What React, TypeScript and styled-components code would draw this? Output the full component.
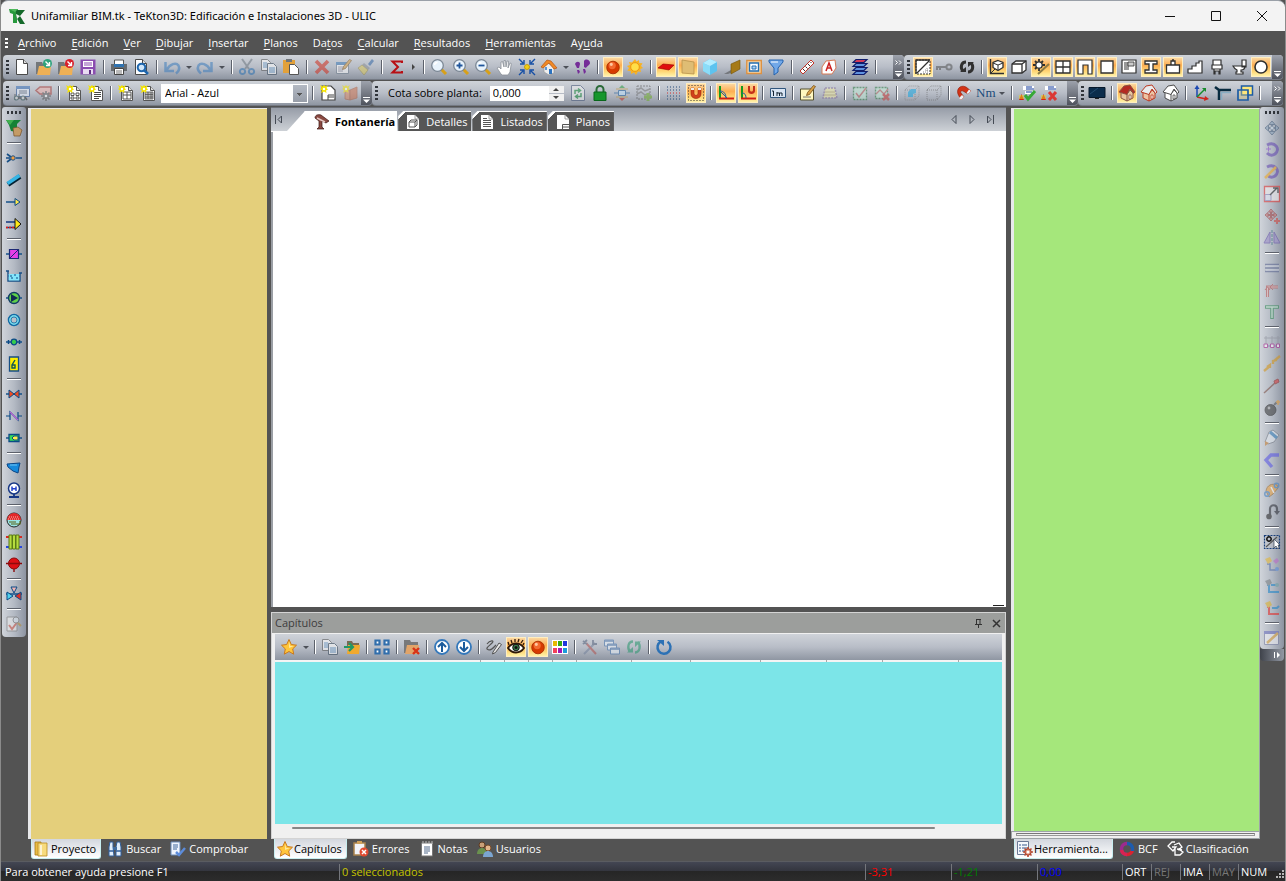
import React from "react";
import styled, { createGlobalStyle, css } from "styled-components";

const Global = createGlobalStyle`
  *, *::before, *::after { box-sizing: border-box; }
  body { margin: 0; background: #535353; }
  body, button, input, select { font-family: "Open Sans", "Noto Sans", sans-serif; font-size: 11px; line-height: 16px; }
  button { border: 0; padding: 0; background: none; color: inherit; }
`;

/* ---------- icon artwork: every entry is a list of [path, fill, stroke, stroke width, dash] on a 16 x 16 grid ---------- */

type Shape = [string, string, string?, number?, string?];
const c = (x: number, y: number, r: number) => `M${x - r} ${y}a${r} ${r} 0 1 0 ${2 * r} 0a${r} ${r} 0 1 0 ${-2 * r} 0`;
const r = (x: number, y: number, w: number, h: number) => `M${x} ${y}h${w}v${h}h${-w}z`;
const N = "none";
const ink = "#303030";
const navy = "#0a4a86";

const page: Shape[] = [["M2.5 .5h7l4 4v11h-11z", "#fff", "#4a4a4a", 1], ["M9.5 .5v4h4", "#ddd", "#4a4a4a", 1]];
const sheet: Shape[] = [["M3.500 1.500h7l4 4v10h-11z", "#fff", "#555", 1], ["M10.500 1.500v4h4", "#ddd", "#555", 1]];
const spark: Shape[] = [["M0 0l2.500 1.500L4 0l1.500 1.500L8 0 6.500 3 8 4.500 6 5.500 6.500 8 4 6.500 1 8l1-2.500L0 4l1.500-1z", "#f5e400"], [c(4, 4, 1.2), "#fff"]];
const folder = (color: string): Shape[] => [["M0 3h6l1 2h5v10H0z", "#74777a"], ["M3 7h12l-1 9H1z", "#eeb055"], [c(11.5, 4.5, 4.5), color], ["M9.500 2.500l4 4M13.500 3v3.500H10", N, "#fff", 1.4]];
const lens: Shape[] = [["M10 10l5 5", N, "#d8a018", 3], [c(6.5, 6.5, 5.8), "#e8f3fc", "#7b8794", 1.3], ["M3.500 6a3 3 0 013-2.500", N, "#fff", 1.5]];
const ball: Shape[] = [[c(8, 8.5, 6.3), "#d63a00", "#a32a00", .8], [c(7.2, 6.6, 3.6), "#f26a30"], [c(6.3, 5.3, 1.6), "#ffc7a0"]];
const hip = (wall: string, roof: string, line: string): Shape[] => [
  ["M2 7v6l6 3 6-3V7L10 3z", wall, line, 1],
  ["M8 16V9l3-4 3 3", N, line, 1],
  ["M0 7l5-6 6-1 5 7-1.500 1.500L11 4 8 9.500z", roof, line, 1],
  [r(10, 10, 2, 4), "#fff", line, .8],
];
const valve: Shape[] = [["M0 8h16", N, navy, 1.4]];
const pen: Shape[] = [["M15.500 1.500l-2-1-6 7-1 3 3-1z", "#d8a24a", "#77501b", .8]];

const art: Record<string, Shape[]> = {
  logo: [["M0 1h9l-1 3v11H4V6L1 5z", "#27993c"], ["M7 2h9l-5 6 5 8h-5L7 9z", "#14692a"], ["M7 6l4 2-3 3z", "#f0f4f0"], ["M0 1h9L6 4z", "#4fb95c"]],
  newDoc: page,
  open: folder("#2fa37c"),
  import: folder("#d81f2a"),
  save: [[r(.5, .5, 15, 15), "#8b4cb0"], [r(3, 2, 10, 6), "#fff"], ["M4 4h8M4 6h8", N, "#8b4cb0", 1], [r(3, 10, 10, 5), "#e9dcf2"], [r(9, 11, 2, 4), "#5d2a80"]],
  print: [[r(3.500, 1, 9, 5), "#fff", "#555", 1], [r(0, 5, 16, 7), "#666b70"], [r(3, 5, 10, 3), "#2f72b0"], [r(3.500, 9.500, 9, 6), "#fff", "#444", 1], ["M5 12h6M5 14h6", N, "#777", 1]],
  preview: [...page, [c(8.5, 8.5, 3.8), "#cfe6fa", "#1f66ad", 2], ["M11 11l4 4", N, "#1f66ad", 2.500]],
  undo: [["M1.500 3v9H10M2.500 11C6 5 12 3 14.500 6.500c1.500 3 0 6-2.500 8", N, "#3c7cbc", 2.500]],
  redo: [["M14.500 3v9H6M13.500 11C10 5 4 3 1.500 6.500c-1.500 3 0 6 2.500 8", N, "#3c7cbc", 2.500]],
  cut: [["M3 0l7 10M13 0L6 10", N, "#6d7780", 2], [c(3.5, 12.5, 2.6), N, "#2f72b0", 2], [c(12.5, 12.5, 2.6), N, "#2f72b0", 2]],
  copy: [["M.5 .5h6l3 3v8h-9z", "#fff", "#555", 1], ["M6.500 4.500h6l3 3v8h-9z", "#fff", "#345", 1], ["M2 4h4M2 6h4M2 8h4M8 9h6M8 11h6M8 13h6", N, "#2f72b0", 1]],
  paste: [[r(0, 1, 12, 13), "#e2a13a"], [r(3, 0, 6, 3), "#70757a"], ["M6.500 5.500h5l4 4v6h-9z", "#fff", "#555", 1]],
  cross: [["M2 2l12 12M14 2L2 14", N, "#d02d1e", 3.6]],
  edit: [[r(.5, 3.500, 12, 11), "#fff", "#6f7d8c", 1], [r(0, 3, 13, 3), "#3c78b4"], ["M2 8h7M2 10h5M2 12h5", N, "#889", 1], ...pen],
  brush: [["M10 5l4-5 2 2-4 5z", "#3567a5"], ["M6 4l6 5-2 2-6-5z", "#8a8e93"], ["M4 6l6 5-4 5L0 9z", "#dcca5f", "#8b7b2b", .6]],
  sigma: [["M13 4V2.500H3.500L9 8l-5.500 5.500H13V12", N, "#b80f14", 2]],
  zoom: lens,
  zoomIn: [...lens, ["M3.500 6.500h6M6.500 3.500v6", N, "#1f559b", 1.800]],
  zoomOut: [...lens, ["M3.500 6.500h6", N, "#1f559b", 1.800]],
  hand: [["M4 15L0 9l2-1 2 2V3l1.500-.5L7 8V1.500h1.500L9 8l1-6 1.500.2L11 9l2-5 1.300.5L13 13l-2 3H5z", "#fff", "#8a9098", .8]],
  fit: [[c(8, 8, 2.5), "#f2cf12", "#bd9000", .8], ["M0 0l4 4M5 1v4H1M16 0l-4 4M11 1v4h4M0 16l4-4M5 15v-4H1M16 16l-4-4M11 15v-4h4", N, "#164fa5", 1.4]],
  home: [["M3 8l4-4 6 5v5l-5 2-5-3z", "#eee", "#999", .7], ["M0 8l6-7 4 1 6 7-3 1-5-6-6 5z", "#f08a26", "#b65312", .7], [r(8, 10, 3, 5), "#2c72bf"], [r(4, 8, 2, 3), "#5b98da"]],
  feet: [["M1 5c1-3 5-3 5 0l-1 4H3zM3 11h2l1 2-2 2zM10 2c2-3 6-1 6 2 0 2-3 3-4 5l-2-1zM9 10h2l1 3-2 2z", "#752d98"]],
  ball,
  sun: [["M8 0l1.500 2.500L12 1l.3 3 3.200.200L14 7l2 2-2.700 1 .7 3-3-.4L9 16l-2-2.600L4 15l-.3-3-3.300-.3L2 9 0 7l3-1-1-3 3 .5z", "#f7b224"], [c(8, 8, 4.3), "#ffdf48", "#e88b0c", .8]],
  redTile: [["M0 9l5-4 11 1-5 5z", "#e00d0d", "#970000", .6]],
  wall: [["M2 1l12 2v12L2 14z", "#dfbd74", "#b7924c", .8]],
  cube: [["M1 4l7-4 7 3v9l-7 4-7-4z", "#5dc3ef"], ["M1 4l7 3v9l-7-4z", "#8adcf8"], ["M1 4l7-4 7 3-7 4z", "#b3edff"]],
  ramp: [["M0 15l7-4h2v2l-5 2z", "#74777c"], ["M7 5l9-4v9l-9 5z", "#a67a18", "#74540c", .6]],
  frames: [[r(.8, 1.500, 14.500, 13), "#f6d6a8", "#dc9244", 1.400], [r(3.500, 4, 9, 8), "#fff", "#256fb3", 1.400], [r(6, 7, 4, 3), "#acd3f7", "#256fb3", 1]],
  funnel: [["M1 1h14v2L10 9v4l-4 3V9L1 3z", "#72a8e8", "#2462ae", 1], ["M3 3h7", N, "#fff", 1]],
  ruler: [["M1 12L12 1l3 3L4 15z", "#fff", "#c33428", 1], ["M4 10l2 2M6.500 7.500l2 2M9 5l2 2M11.500 3l1 1", N, "#333", 1]],
  tag: [["M1 8l4-6 9-1 1 8-4 6H1z", "#fff", "#d77a57", 1], ["M5 12l3-8 3 8M6 9h4", N, "#c22", 1.500]],
  layers: [["M4 .5h11l-3 3H1z", "#d23a5a", "#101d6b", 1.200], ["M4 4.500h11l-3 3H1zM4 8.500h11l-3 3H1zM4 12.500h11l-3 3H1z", "#5f93e0", "#101d6b", 1.200]],
  hatch: [[r(1, 1, 14, 14), "#fff", ink, 1, "2 1"], ["M1 15V1h14M2 14L14 2", N, ink, 1.300], ["M8 13h5M10 11h3M12 9v3", N, "#777", .8, "1 1"]],
  key: [[c(12, 8, 2.6), N, "#555", 2], ["M9 8H0v3M3 8v3", N, "#555", 2]],
  sync: [["M7 3C2 3 1 9 4 12M9 13c5 0 6-6 3-9", N, ink, 3], ["M1 13h6V8zM15 3H9v5z", ink]],
  axisCube: [["M1.500 0v14.500H15", "none", ink, 1.400], ["M9 1.500l5 2v5l-5 3-5-3v-5z", "#fff", ink, 1.300], ["M4 4l5 2 5-2M9 6v5M2 14l4-4", N, ink, 1]],
  box: [["M1 5l4-3h10v9l-4 3H1z", "#fff", ink, 1.300], ["M1 5h10v9M11 5l4-3", N, ink, 1.300]],
  gear: [["M6 0v3M6 9v3M0 6h3M9 6h3M2 2l2 2M10 2L8 4M2 10l2-2", N, ink, 1.800], [c(6, 6, 3.200), "#fff", ink, 1.300], ["M5 15L16 5", N, "#8d7b45", 2]],
  window: [[r(1, 2, 14, 12), "#fff", ink, 1.300], ["M8 2v12M1 8h14", N, ink, 1.300]],
  door: [["M1 15V1h14v14h-4V6H6v9z", "#fff", ink, 1.200]],
  square: [[r(2, 2, 12, 12), "#fff", ink, 1.300]],
  corner: [[r(1, 1, 14, 13), "#fff", ink, 1.200], [r(3, 3, 5, 8), "#999"], [r(7, 3, 6, 4), "#ccc", ink, .8]],
  beam: [["M2 2h12v3h-4v6h4v3H2v-3h4V5H2z", "#fff", ink, 1.300]],
  weight: [["M6 2h4v4H6zM1.500 6h13v8h-13z", "#fff", ink, 1.300], ["M8 0v2", N, ink, 1.500]],
  stairs: [["M1 14v-4h4V7h4V4h3V2h3v12z", "#fff", ink, 1.200]],
  chair: [["M4 1h8v5H4zM3 6h10v4H3zM5 10v5h1v-3h4v3h1v-5", "#fff", ink, 1.200]],
  toilet: [["M11 1h4v7h-4zM2 7h12c0 3-2 4-4 4v2h2v2H5v-2h1v-2C4 10 3 9 2 7z", "#fff", ink, 1.200]],
  ring: [[c(8, 8, 6), "#fff", ink, 1.6]],
  form: [[r(2.500, 1.500, 13, 10), "#e5eefb", "#28508c", 1], [r(2, 1, 14, 3), "#376db5"], ["M5 6h8M5 8h8", N, "#456", 1], ["M1 9v6M5 9v4", N, "#333", 1], [c(2.5, 13, 2), "#ddd", "#355", 1.200], [c(9, 13, 2), "#ddd", "#355", 1.200], ["M4 13h3M11 12l2 3", N, "#333", 1.500]],
  tagGear: [["M4 2h11v7H4L0 5.500z", "#ecb3ad", "#a53a35", 1.500], ["M10 6v10M5 11h10M6.500 7.500l7 7M13.500 7.500l-7 7", N, "#555", 1.600], [c(10, 11, 3), "#666"], [c(10, 11, 1.3), "#fff"]],
  sheetGrid: [...sheet, [r(5, 8, 3, 2.500), "#fff", "#444", .9], [r(10, 8, 3, 2.500), "#fff", "#444", .9], [r(5, 12, 3, 2), "#fff", "#444", .9], [r(10, 12, 3, 2), "#fff", "#444", .9], ...spark],
  sheetLines: [...sheet, ["M6 7.500h7M6 9.500h7M6 11.500h7M6 13.500h5", N, "#444", 1], ...spark],
  sheetTable: [...sheet, ["M5 7h8v7H5zM5 10h8M9 7v7", N, "#555", 1], ...spark],
  sheetTable2: [...sheet, ["M5 7h8v7H5zM5 9.500h8M5 12h8M8 7v7M11 7v7", "#bbb", "#555", .8], ...spark],
  sheetPlan: [["M2 1h9l4 4v10H2z", "#fff", "#444", 1.200], ["M8 15v-5h6M8 12h6", N, "#444", 1], ...spark],
  books: [["M3 5h5v10l-5-1z", "#d98a67", "#a8593a", .8], ["M8 5l7-3v11l-7 2z", "#cc7350", "#a8593a", .8], ...spark],
  swap: [["M1.500 .5h9l4 4v11h-13z", "#eee", "#457", 1], ["M5 9V5.500h5M8 3.500l2.500 2L8 7.500M11 8v3.500H6M8 9.500l-2.500 2 2.500 2", N, "#168a3a", 1.500]],
  lock: [["M4.500 8V4.500a3.500 3.500 0 017 0V8", N, "#2b6a38", 2], [r(2, 7, 12, 8.500), "#17962d", "#08661a", 1]],
  level: [["M0 8h4M12 8h4", N, "#1b5a9b", 1.200], [r(4.500, 5.500, 7, 5), "#bde0fa", "#1b5a9b", 1], ["M8 0l3 3H5z", "#2a9a3f"], ["M8 16l3-3H5z", "#c23226"], ["M2 4h12M2 12h12", N, "#c2942e", 1]],
  waves: [[r(1, 1, 13, 13), N, "#555", 1, "2 1"], ["M1 5l4-2 4 3 5-2M1 9l4-2 4 3 5-2", N, "#777", 1.500], ["M12 8v8M8 12h8", N, "#6caa28", 3]],
  dots: [["M1 2h14M1 5h14M1 11h14M1 14h14", N, "#274c7a", 1, "1 2"], ["M1 8h14", N, "#c33", 1, "1 2"]],
  magnetDots: [[r(.5, .5, 15, 15), N, "#333", 1, "1 2"], ["M3 3h3v5c0 3 4 3 4 0V3h3v6c0 6-10 6-10 0z", "#d2401b", "#8f230a", .5], ["M3 3h3v2H3zM10 3h3v2h-3z", "#eee"]],
  angle: [["M2 1v12", N, "#159b20", 2], ["M1 13.500h15", N, "#d01f16", 2], ["M2 6c4 0 6 3 6 7M2 6l7 7", N, "#24629b", 1]],
  angleMagnet: [["M2 1v12", N, "#159b20", 2], ["M1 13.500h15", N, "#d01f16", 2], ["M2 8c3 0 4 2 4 5", N, "#24629b", 1], ["M8 1h2v4c0 2 3 2 3 0V1h2v5c0 4-7 4-7 0z", "#c4301a"]],
  metre: [[r(.5, 3.500, 15, 9), "#d8e4f3", "#31567d", 1], ["M2 6h1.500v5M7 11V7M7 8h2.500v3M9.500 8H12v3", N, "#123", 1]],
  note: [[r(.5, 4, 13, 11), "#fff7c0", "#55502f", 1], ["M3 12h8", N, "#777", 1], ...pen],
  trapeze: [["M3 3h10l2 10H1z", "#eee9a3", "#846f9e", 1.500, "2 1"], ["M3 7h10M2 10h12", N, "#b3a463", 1]],
  selCheck: [[r(1.500, 2.500, 13, 12), "#bfe7d3", "#307846", 1.300, "2 1"], ["M4 8l3 4 7-9", N, "#b5615f", 1.5]],
  selCross: [[r(1.500, 2.500, 12, 11), "#bfe7d3", "#307846", 1.300, "2 1"], ["M2 9l4-4 4 4 4-5", N, "#b5615f", 1.3], ["M9 9l6 6M15 9l-6 6", N, "#c33d38", 2.500]],
  cubeBlue: [["M1 5l4-4h10v10l-4 4H1zM1 5h10v10M11 5l4-4", N, "#777", 1, "1 1"], ["M4 7l3-3h5v4l-3 1v3H4z", "#16a5e0"]],
  cubeDots: [["M1 5l4-4h10v9l-4 5H1zM1 5h10v10M11 5l4-4", N, "#666", 1, "1 1"]],
  magnet: [["M3 11C-1 5 4-1 10 2l5 4-3 3-5-3c-2-1-3 1-2 2l3 4-3 3z", "#d23316", "#8e1907", .6], ["M12 9l3-3-2-1.500L10.500 8zM5 15l3-3-2-2-3 3z", "#eceff2"]],
  listOk: [["M4 1h11v4H4zM6 6h9v3H6z", "#fff"], ["M7 2h6M7 4h8M7 7h6", N, "#123a9c", 1], ["M0 15l2.500-6L5 15z", "#d62217"], ["M0 11h5M0 13h5", N, "#ead61b", 1], ["M6 10l3 4 7-8", N, "#37a937", 3]],
  listBad: [["M4 1h11v4H4z", "#fff"], ["M7 2h6M7 4h8", N, "#123a9c", 1], ["M0 15l2.500-6L5 15z", "#d62217"], ["M0 11h5M0 13h5", N, "#ead61b", 1], ["M8 7l7 8M15 7l-7 8", N, "#db3834", 3]],
  screen: [[r(0, 2.500, 16, 10), "#0b2d4c", "#06182a", 1], [r(6, 13, 4, 1), "#222"], ["M1 9L9 3", N, "#234d70", 1]],
  house1: hip("#e9c69f", "#b42a22", "#8a5544"),
  house2: hip("#edc5a5", "#e9eced", "#ba3a23"),
  house3: hip("#fff", "#fff", "#4c4c4c"),
  axes: [["M4 3v9", N, "#1b48b2", 1.500], ["M4 12l9 2", N, "#cf231b", 1.700], ["M4 12l8-8", N, "#178b2c", 1.500], ["M1.500 4L4 0l2.500 4z", "#1b48b2"], ["M12 11l4 3-5 2z", "#cf231b"], ["M9 3h4v4z", "#178b2c"]],
  pipes: [["M0 2l4 3h12M4 5v10", N, "#082b3f", 2.500], ["M6.500 15V7.500H16", N, "#87adc3", 1.500]],
  overlap: [[r(4.500, 1, 11, 9), "#ffe87a", "#1c5ca5", 1.500], [r(1, 5, 10, 10), "#ffe87a55", "#1c5ca5", 1.700]],
  logoTool: [["M0 0h15l-4 4v8L5 11 3 5z", "#168235"], ["M0 0h8L4 5z", "#42b050"], ["M7 8l5-1 4 3-2 6H8z", "#c49b66", "#765129", .7]],
  node: [["M0 8h4M10 8h6M1 4l4 3M1 12l4-3", N, "#174f86", 1.600], [c(7, 8, 2.200), "#f2a044", "#174f86", 1]],
  pipe: [["M2 12.500L14 4.500", N, "#062233", 5], ["M1.500 11.500L13.500 3.500", N, "#35b4e4", 3.500]],
  arrow: [["M0 8h10", N, navy, 1.400], ["M9 4.500l5 3.500-5 3.500z", "#ffe84a", navy, 1]],
  outlet: [["M0 6h9M0 11.500h9", N, "#153a80", 1.400], ["M0 11.500h9", N, "#e31b13", 1.500, "2 1"], ["M9 2.500l6 5.500-6 5.500z", "#ffe916", "#151515", 1]],
  meter: [...valve, [r(3.500, 3.500, 9, 9), "#e63ee8", "#1c2875", 1.200], ["M4 12l8-8", N, "#1c2875", 1]],
  tank: [["M0 3h3M2 3v10h12V5M13 5h3M2 8h12", N, "#174f86", 1.400], [r(2.700, 6, 10.600, 6.500), "#83e5fb"], ["M4 8h2M8 7h2M5 10h2M10 10h2", N, navy, 1]],
  pump: [...valve, [c(8, 8, 5.500), "#5fd04a", "#123c64", 1.400], ["M5 4l7 4-7 4z", "#102a51"]],
  loop: [[c(8, 8, 5.500), N, "#116ba5", 1.500], [c(8, 8, 4), N, "#69dcf2", 1.5], [c(8, 8, 3), "#b9c0c9", "#116ba5", .8]],
  joint: [...valve, [c(8, 8, 2.8), "#35cd4d", navy, 1.300], ["M2.500 6v4M13.500 6v4", N, navy, 1.500]],
  heater: [[r(3.500, 1, 9, 14), "#fff000", "#174f86", 1.300], ["M9 4L6 9v3h3V9H6", N, "#155", 1.400]],
  valveRed: [...valve, ["M3 4l5 4-5 4zM13 4L8 8l5 4z", "#f04b21", navy, 1]],
  zed: [["M0 8h4v4M4 12V4l8 8V4M12 8h4", N, navy, 1.200], ["M4 4l8 8", N, "#b565d1", 1.500]],
  filter: [...valve, [r(3, 4.500, 10, 7), "#36db56", navy, 1.300], ["M8 6h4v4H8L6 8z", "#fff04a", navy, 1]],
  tap: [["M1 4l13-1-1 4-1 6-5-2-5-4z", "#1789db", "#0a4687", 1], ["M4 5h7", N, "#70c5f4", 1]],
  gauge: [[c(8, 6.500, 5.500), "#fff", "#173785", 1.500], ["M6 9V4.500M10 9V4.500M6 6.800h4", N, "#2341cb", 1.500], ["M8 12v3M3 15h10", N, "#173785", 1.800]],
  boiler: [[c(8, 8, 7), "#9ae3e5", "#222", 1], ["M1 8a7 7 0 0114 0z", "#e3282a"], ["M3 5h10M2 7h12", N, "#f9b9b0", 1, "1 1"], ["M5 12h9v-3M3 10h7", N, "#596219", 1.200]],
  radiator: [["M0 3h16", N, "#d52a23", 2], ["M0 13h16", N, "#2748e0", 2], ["M3 1h3v14H3zM6.500 1h3v14h-3zM10 1h3v14h-3z", "#b6dd3e", "#5b7a17", 1]],
  redCircle: [[c(8, 7.500, 5.500), "#dd1014", "#8b0b0c", 1], ["M0 7.500h16M8 13v3", N, "#8b0b0c", 1.400]],
  threeWay: [...valve, ["M1 6l6 4-6 4z", "#51d1ed", navy, 1], ["M15 6l-6 4 6 4z", "#d93028", navy, 1], ["M5 1h6L8 7z", "#f0b3b2", navy, 1]],
  checkDoc: [[r(1, 1, 10, 14), "#eee", "#777", 1], ["M3 9l3 4 6-8", N, "#cf5545", 2], [c(10, 4, 3), "#dfe8f0", "#777", 1], ["M12 7l3 3", N, "#b48b35", 2]],
  move: [["M8 3v10M3 8h10", N, "#4e6782", 2.200], ["M5 4.500L8 1l3 3.500zM5 11.500L8 15l3-3.500zM4.500 5L1 8l3.500 3zM11.500 5L15 8l-3.500 3z", "#8ba4bc", "#435b78", 1], [c(8, 8, 1.6), "#ccd9e6"]],
  rotate: [["M3 3c8-4 14 4 8 9-3 2-6 1-8-1", N, "#6043b0", 3], ["M2 7h5M4.500 4.500v5", N, "#84c", 1]],
  rotateLine: [["M3 3c8-4 14 4 8 9-3 2-6 1-8-1", N, "#6043b0", 3], ["M1 14L12 3", N, "#f0a51b", 2.500]],
  scale: [[r(.5, .5, 15, 15), "#f7f3f3", "#e22f2b", 1.300], [r(1, 8.500, 6, 6), "#e7e9f8", "#8d8cc0", 1], ["M6 9l7-7M9 2h5v5", N, "#222", 1.400]],
  moveRed: [["M7 3v8M3 7h8", N, "#9d3a3c", 2.200], ["M4.500 4L7 1l2.500 3zM4.500 10L7 13l2.500-3zM4 4.500L1 7l3 2.500zM10 4.500L13 7l-3 2.500z", "#d4817d", "#9d3a3c", 1], ["M13 10v6M10 13h6", N, "#cf4038", 2]],
  mirror: [["M6 2v11H0zM10 2v11h6z", "#9b8dc9", "#6451aa", 1], ["M8 0v16", N, "#267", 1, "3 1"]],
  lines3: [["M1 4.500h14M1 8h14M1 11.500h14", N, "#56618e", 1.600], ["M2 6h13M2 10h13", N, "#dce0ed", 1]],
  bend: [["M3.500 15V5H14", N, "#b85050", 3], ["M3.500 15V5H14", N, "#eabbb9", 1], ["M1 8l2.500-3L6 8M9 2L6 5l3 3", N, "#b85050", 1]],
  tee: [["M1 3h14M8 3v12", N, "#2b8550", 3.600], ["M2 3h12M8 3v11", N, "#c6e8d2", 1.400]],
  spacing: [["M2 2v10M8 2v10M14 2v10M0 4h16", N, "#8c8f9a", 1], ["M2 12h12", N, "#7d68b0", 1.200], [r(0, 10, 3.500, 3.500), "#fff", "#a4208c", 1], [r(6.500, 10, 3.500, 3.500), "#fff", "#a4208c", 1], [r(12.500, 10, 3, 3.500), "#fff", "#a4208c", 1]],
  dashes: [["M0 15l6-5M6 12V9l-3 2M10 5l6-5M9 8V5l4-1", N, "#d49210", 2.300]],
  stick: [["M0 15L12 4", N, "#77483d", 1.500], ["M10 3l4-2 1 3-4 2z", "#dc3434", "#982323", 1]],
  bomb: [[c(6.500, 10, 5.500), "#353535", "#111", .8], [c(5, 8, 1.400), "#aaa"], ["M10 5l3-3", N, "#555", 2], ["M12 2h4M14 0v5", N, "#e89a2d", 1.500]],
  tube: [["M5 2l4-2 6 5-5 7-6 2-3-2z", "#e8edf3", "#747a84", 1], ["M6 2l7 6", N, "#3782bd", 3], ["M1 11l4 2-4 3z", "#c37a2e"]],
  polyline: [["M15 3H7L2 8l6 7", N, "#5450e6", 3.300]],
  blobs: [["M2 9c1-6 6-8 11-6l1 3-5 6-4 3z", "#efa23d", "#98672a", 1], ["M7 5l3 6", N, "#fff", 1.500], [c(3, 12, 2.300), N, "#407fc0", 1.500], [c(12.5, 3.5, 2.2), N, "#407fc0", 1.500]],
  hook: [["M6 13V5c0-5 7-5 7 0v3", N, "#282a32", 2.200], ["M10 7h6l-3 4z", "#282a32"], [c(5, 12.5, 2.800), "#222"]],
  selector: [[r(.5, 1.500, 15, 13), N, "#183e79", 1.200, "2 1"], [c(5, 5, 2.2), N, "#111", 1.500], ["M2 13L13 3", N, "#555", 1.200], ["M10 5v9l2-2 2 3 1-1-1-3h2z", "#fff", "#345", .7]],
  path1: [["M3 8h3v6h6", N, "#4a67a7", 1.500], ["M1 3l5-2 2 4-4 3z", "#e6b62b"], ["M9 5l4-3 2 3-3 3z", "#bc64c8"], [c(13, 13, 2), "#5489df"]],
  path2: [["M3 7h2v7h10M7 7h6", N, "#1782c8", 2], ["M1 3l5-2 2 4-4 3z", "#757b7e"], [c(13, 7, 2), "#6ba0a5"]],
  path3: [["M3 7h2v7h10", N, "#e42420", 2], ["M1 3l5-2 2 4-4 3z", "#e0b022"], ["M8 8h5l2-2", N, "#1782c8", 2]],
  pencilForm: [[r(.5, 1.500, 14, 13), "#f4f4f8", "#777da0", 1], [r(0, 1, 15, 3), "#676cbd"], ["M3 13L14 3", N, "#e0a539", 2.500]],
  star: [["M8 .5l2.300 5 5.200.7-3.800 3.700 1 5.300L8 12.500l-4.700 2.700 1-5.300L.5 6.200l5.200-.7z", "#ffc63c", "#c87920", 1], ["M8 3l1.300 4H13L8 9z", "#ffe79c"]],
  folderIn: [["M3 2h5l1 2h6v4H3z", "#7a6a52"], ["M4 6h12l-1 9H3z", "#f0a92e"], ["M0 8h8M5 4l4 4-4 4", N, "#219765", 2.200]],
  tiles: [["M1.500 1.500h4v4h-4zM10.500 1.500h4v4h-4zM1.500 10.500h4v4h-4zM10.500 10.500h4v4h-4z", "#fff", "#316eac", 2.200]],
  folderX: [["M0 1h6l1 2h7v11H0z", "#77787a"], ["M3 6h12l-2 9H1z", "#e1a469"], ["M9 9l6 6M15 9l-6 6", N, "#d83317", 2.400]],
  up: [[c(8, 8, 7), "#fff", "#3478bb", 1.800], ["M8 13V4M4 8l4-4 4 4", N, "#1b5b9c", 2]],
  down: [[c(8, 8, 7), "#fff", "#3478bb", 1.800], ["M8 3v9M4 8l4 4 4-4", N, "#1b5b9c", 2]],
  scribble: [["M1 5c3-4 8-4 5-1s-8 6-3 7c3 0 5-3 7-5", N, "#535353", 1.200], ["M7 13l6-9 2.500 1.500-6 8-3 1.500z", "#e4e4e4", "#535353", 1]],
  eye: [["M0 9c4-6 12-6 16 0-4 6-12 6-16 0z", "#fff", "#2e1808", 1.800], [c(8, 8.5, 3.300), "#397b4b", "#111", 1], [c(8, 8.5, 1.500), "#111"], ["M1 6L0 3M4 4L3 1M7 3V0M10 3l1-3M13 4l2-3M15 6l1-2", N, "#2e1808", 1.300]],
  palette: [[r(0, 1, 16, 14), "#fff"], [r(1, 2, 4, 5), "#e7b900"], [r(6, 2, 4, 5), "#35a917"], [r(11, 2, 4, 5), "#2038dc"], [r(1, 9, 4, 5), "#f34058"], [r(6, 9, 4, 5), "#a216b4"], [r(11, 9, 4, 5), "#1c9bdc"]],
  tools: [["M2 15L13 4", N, "#73819b", 2], ["M4 4l10 11", N, "#b0504c", 2], ["M1 5l4-4M1 2l4 3M11 1v4h4", N, "#53617b", 1.800]],
  windows: [[r(.5, 1, 9, 6), "#edf4fb", "#4472aa", 1], [r(3.500, 5, 9, 6), "#edf4fb", "#4472aa", 1], [r(6.500, 9, 9, 6), "#edf4fb", "#4472aa", 1], ["M1 2h8M4 6h8M7 10h8", N, "#4472aa", 1.500]],
  syncGreen: [["M7 2.500C2 2.500 1 9 4 12.500M9 13.500c5 0 6-7 3-10.500", N, "#27966c", 2.300], ["M1 13.500h6V8zM15 2.500H9V8z", "#27966c"]],
  reload: [["M5 2.500a6.500 6.500 0 106.500.3", N, "#2c71b5", 2.500], ["M1 1h7v6z", "#2c71b5"]],
  dish: [["M1 4c0-3 3-4 6-3l8 6-3 2-4-2v6l2 2H3l2-2V7z", "#8a4a42", "#3b1411", .7], ["M3 4l8 4", N, "#e7c8c4", 1.500]],
  docCube: [["M2 1h8l4 4v10H2z", "#fff"], ["M10 1v4h4", N, "#888", .8], ["M4 8l2-2h6v5l-2 2H4zM4 8h6v5M10 8l2-2", N, "#555", 1]],
  docText: [["M2 1h8l4 4v10H2z", "#fff"], ["M10 1v4h4", N, "#888", .8], ["M4 4.500h4M4 6.500h8M4 8.500h8M4 10.500h8M4 12.500h8", N, "#555", 1]],
  docPlan: [["M2 1h8l4 4v10H2z", "#fff"], ["M10 1v4h4", N, "#888", .8], ["M7.500 15v-4.500H14M7.500 13H14", N, "#555", 1]],
  folders: [["M1 1h6v13H1z", "#e9bb44", "#a77b17", .8], ["M4 2h9v13H4z", "#f7db7d", "#b78b21", .8], ["M7 4v10", N, "#fff", 1.300]],
  binoculars: [["M3 1h3v5l1 9H2V6zM10 1h3l1 5v9H9V6z", "#e2eefa", "#315f9b", 1], [r(6, 6, 4, 3), "#416c9d"], ["M2 10h5M9 10h5", N, "#315f9b", 1.5]],
  docCheck: [[r(1, 1, 9, 13), "#eef4fd", "#6a8cba", 1], ["M3 4h5M3 6h5M3 8h4", N, "#3e669c", 1], ["M6 11l3 3 6-7", N, "#5c8cdb", 2.500]],
  clipX: [[r(1, 2, 11, 12), "#f2f4f8", "#aa824b", 1.500], [r(4, 0, 5, 3), "#d0a25a"], [c(11, 11, 4.500), "#e14a30"], ["M9 9l4 4M13 9l-4 4", N, "#fff", 1.500]],
  notepad: [[r(2.500, 2, 11, 13), "#fff", "#777", 1], ["M4 0v3M7 0v3M10 0v3M13 0v3", N, "#bbb", 1], ["M5 6h6M5 8h6M5 10h6M5 12h4", N, "#526b8b", 1]],
  users: [[c(5, 4, 3), "#c9a078", "#5d3b22", 1], ["M0 13c0-8 10-8 10 0z", "#6a914e"], [c(11, 7, 3), "#e3b68b", "#784a28", 1], ["M6 16c0-8 10-8 10 0z", "#7ba5d1"]],
  listGear: [[r(.5, .5, 11, 13), "#f5f8fc", "#6a7995", 1], ["M2 4h2M2 7h2M2 10h2M5 4h5M5 7h5M5 10h3", N, "#36598d", 1.200], ["M11 6v10M6 11h10M7.500 7.500l7 7M14.500 7.500l-7 7", N, "#b9503a", 1.600], [c(11, 11, 3.200), "#dc8a72", "#a93d26", 1], [c(11, 11, 1.500), "#fff"]],
  bcf: [["M8 13.500A5.500 5.500 0 118 2.500", N, "#9c2a8f", 3.500], ["M13.500 8A5.500 5.500 0 018 13.500", N, "#d92331", 3.500], ["M8 2.500A5.500 5.500 0 0113.500 8v2", N, "#1d5cae", 3.500], ["M2.500 9a5.500 5.500 0 005.500 4.500", N, "#d92350", 3.500]],
  knot: [["M8 1H5L1 5l5 5 3-4H5M7 4l5-2 3 4-4 3M8 6v8h5l3-3-3-2M10 8l5 1", N, "#fff", 1.300]],
};

const Svg = styled.svg<{ $dim?: boolean }>`
  display: block;
  flex: none;
  width: 16px;
  height: 16px;
  overflow: visible;
  opacity: ${(p) => (p.$dim ? 0.55 : 1)};
`;

function Icon({ name, dim }: { name: string; dim?: boolean }) {
  return (
    <Svg viewBox="0 0 16 16" $dim={dim} aria-hidden="true">
      {art[name].map(([d, fill, stroke, width, dash], i) => (
        <path key={i} d={d} fill={fill} stroke={stroke} strokeWidth={width} strokeDasharray={dash} />
      ))}
    </Svg>
  );
}

/* ---------- frame ---------- */

const Shell = styled.div`
  min-height: 100vh;
  display: flex;
  flex-direction: column;
  background: #535353;
  border-left: 1px solid #8b8b8b;
  border-right: 1px solid #8b8b8b;
  color: #000;
  white-space: nowrap;
  overflow: hidden;
`;

const TitleBar = styled.header`
  display: flex;
  align-items: center;
  height: 31px;
  padding-left: 8px;
  gap: 6px;
  background: #f3f3f3;
  border-top: 1px solid #9aa0a8;
  border-radius: 7px 7px 0 0;
`;
const Title = styled.h1`
  margin: 0;
  flex: 1;
  font-family: "Noto Sans", "Open Sans", sans-serif;
  font-size: 11px;
  line-height: 16px;
  font-weight: 400;
`;
const WindowButtons = styled.div`
  display: flex;
`;
const WindowButton = styled.button`
  width: 46px;
  height: 30px;
  display: grid;
  place-items: center;
`;
const WindowGlyph = styled.svg`
  width: 10px;
  height: 10px;
  fill: none;
  stroke: #111;
`;

const MenuBar = styled.nav`
  display: flex;
  align-items: center;
  height: 24px;
  padding-left: 2px;
  color: #fff;
`;
const Grip = styled.i<{ $light?: boolean; $flat?: boolean }>`
  flex: none;
  ${(p) =>
    p.$flat
      ? "width: 15px; height: 3px; margin: 4px 0 3px;"
      : `width: 3px; height: ${p.$light ? 11 : 15}px; margin: 0 2px 0 2px;`}
  background: repeating-linear-gradient(
    ${(p) => (p.$flat ? "90deg" : "180deg")},
    ${(p) => (p.$light ? "#fff" : "#30343a")} 0 2px,
    transparent 2px 4px
  );
`;
const MenuItem = styled.button`
  margin: 0 7px 0 8px;
  u { text-underline-offset: 2px; }
`;

/* ---------- tool bars ---------- */

const BarRow = styled.div`
  display: flex;
  height: 26px;
  padding: 0 2px;
`;
const Bar = styled.div<{ $grow?: boolean; $vertical?: boolean }>`
  display: flex;
  align-items: center;
  min-width: 0;
  ${(p) => p.$grow && "flex: 1;"}
  ${(p) =>
    p.$vertical
      ? css`
          flex-direction: column;
          width: 24px;
          background: linear-gradient(90deg, #d0d4da, #b4bac4 50%, #8d94a1);
          border-radius: 3px 3px 4px 4px;
        `
      : css`
          height: 25px;
          padding-left: 1px;
          background: linear-gradient(#cfd3d9, #b8bdc7 50%, #8f96a2);
          border-radius: 4px;
          border-bottom: 1px solid #747983;
        `}
`;
const ToolButton = styled.button<{ $on?: boolean }>`
  flex: none;
  display: grid;
  place-items: center;
  width: 20px;
  height: 20px;
  margin: 1px;
  ${(p) =>
    p.$on &&
    css`
      border: 1px solid #ffeec0;
      background: linear-gradient(#fcd7a0, #fdae52 40%, #ffd777 75%, #fff2a8);
    `}
`;
const UnitButton = styled(ToolButton)`
  font-family: "Liberation Serif", serif;
  font-size: 13px;
  color: #184b7a;
`;
const Divider = styled.i<{ $flat?: boolean; $slim?: boolean }>`
  flex: none;
  ${(p) =>
    p.$flat
      ? "width: 14px; height: 2px; margin: 3px 0; background: linear-gradient(#5c616b 50%, #fff 50%);"
      : `width: 2px; height: 14px; margin: 0 3px 0 ${p.$slim ? 3 : 4}px; background: linear-gradient(90deg, #5c616b 50%, #fff 50%);`}
`;
const Drop = styled.button<{ $side?: boolean }>`
  flex: none;
  width: 11px;
  height: 20px;
  display: grid;
  place-items: center;
  &::after {
    content: "";
    border: 3px solid transparent;
    ${(p) => (p.$side ? "border-left-color: #444; border-right: 0;" : "border-top-color: #4c5058; border-bottom: 0;")}
  }
`;
const MoreButton = styled.button<{ $gap?: number }>`
  flex: none;
  display: flex;
  flex-direction: column;
  justify-content: space-between;
  align-items: center;
  align-self: stretch;
  width: 11px;
  margin-left: auto;
  padding: 5px 0 2px;
  background: linear-gradient(#9da2ac, #4f535d);
  border-radius: 0 4px 4px 0;
`;
const Spacer = styled.i`
  width: 8px;
`;
const MoreGlyph = styled.svg`
  display: block;
  width: 7px;
  height: 6px;
  fill: none;
  stroke: #fff;
`;
const SideMoreButton = styled(MoreButton)`
  width: 24px;
  height: 12px;
  align-items: flex-end;
  margin: 0;
  padding: 3px 3px;
  border-radius: 0 0 4px 4px;
  background: linear-gradient(90deg, #3f434b, #9298a3);
`;

function More({ chevrons }: { chevrons?: boolean }) {
  return (
    <MoreButton aria-label="Opciones de la barra">
      <MoreGlyph viewBox="0 0 7 6">{chevrons && <path d="M.5 .5L2.500 2.500.5 4.500M4 .5L6 2.500 4 4.500" />}</MoreGlyph>
      <MoreGlyph viewBox="0 0 7 6">
        <path d="M0 .5h7" />
        <path d="M0 2.500h7L3.500 6z" fill="#fff" stroke="none" />
      </MoreGlyph>
    </MoreButton>
  );
}

/* "|" is a divider, "v" a drop-down arrow, ">" a side arrow; "+" marks a pressed tool and "-" a disabled one */
function Tools({ list, flat, slim }: { list: string; flat?: boolean; slim?: boolean }) {
  return (
    <>
      {list.split(" ").map((item, i) => {
        if (item === "|") return <Divider key={i} $flat={flat} $slim={slim} />;
        if (item === "v" || item === ">") return <Drop key={i} $side={item === ">"} aria-label="Más opciones" />;
        if (item === "Nm") return <UnitButton key={i}>Nm</UnitButton>;
        const on = item[0] === "+";
        const dim = item[0] === "-";
        const name = on || dim ? item.slice(1) : item;
        return (
          <ToolButton key={i} $on={on} aria-label={name} aria-pressed={on} disabled={dim}>
            <Icon name={name} dim={dim} />
          </ToolButton>
        );
      })}
    </>
  );
}

const FontSelect = styled.select`
  flex: none;
  width: 147px;
  height: 19px;
  margin: 0 1px 0 2px;
  padding: 0 3px;
  border: 1px solid #fff;
  border-radius: 0;
  appearance: none;
  color: #000;
  background:
    linear-gradient(#555, #555) right 5px center / 5px 1px no-repeat,
    linear-gradient(#555, #555) right 6px top 9px / 3px 1px no-repeat,
    linear-gradient(#555, #555) right 7px top 10px / 1px 1px no-repeat,
    linear-gradient(#b3b9c3, #979da8) right center / 14px 100% no-repeat,
    #fff;
`;
const Caption = styled.label`
  margin: 0 8px;
`;
const HeightInput = styled.input`
  flex: none;
  width: 59px;
  height: 15px;
  padding: 0 3px;
  border: 0;
  background: #fff;
`;
const Spinner = styled.div`
  flex: none;
  display: flex;
  flex-direction: column;
  width: 15px;
  margin-right: 3px;
  gap: 1px;
`;
const Step = styled.button<{ $up?: boolean }>`
  height: 7px;
  display: grid;
  place-items: center;
  background: #f0f0f0;
  &::after {
    content: "";
    border: 3px solid transparent;
    ${(p) => (p.$up ? "border-bottom-color: #444; border-top: 0;" : "border-top-color: #444; border-bottom: 0;")}
  }
`;

/* ---------- work area ---------- */

const Work = styled.main`
  flex: 1;
  display: flex;
  align-items: stretch;
  padding: 0 1px;
`;
const Rail = styled.aside`
  flex: none;
  display: flex;
  flex-direction: column;
  align-items: flex-start;
  width: 24px;
`;
const RailEnd = styled.div`
  height: 2px;
`;
const Column = styled.section<{ $width?: number; $gap?: number }>`
  display: flex;
  flex-direction: column;
  min-width: 0;
  margin-left: ${(p) => p.$gap ?? 0}px;
  ${(p) => (p.$width ? `flex: none; width: ${p.$width}px;` : "flex: 1;")}
`;
const SidePane = styled.div<{ $tone: string; $foot?: boolean }>`
  flex: 1;
  margin-top: 1px;
  background: ${(p) => p.$tone};
  border: solid #e8e9eb;
  border-width: 1px 0 0 3px;
  ${(p) => p.$foot && "border-right: 1px solid #9ea3a8; border-bottom: 0;"}
`;
const PaneFoot = styled.div`
  height: 8px;
  padding: 1px 4px 3px;
  background: #f0f0f0;
  border: 1px solid #9ea3a8;
  &::after {
    content: "";
    display: block;
    height: 3px;
    border: 1px solid #999;
    border-top: 1px solid #777;
  }
`;

const DocTabs = styled.div`
  display: flex;
  align-items: flex-end;
  height: 25px;
  background: linear-gradient(#979da8, #cdd1d6);
  border-top: 1px solid #6a6e76;
  border-bottom: 1px solid #fff;
`;
const DocTab = styled.button<{ $on?: boolean }>`
  display: flex;
  align-items: center;
  gap: 5px;
  height: 20px;
  margin-left: ${(p) => (p.$on ? 0 : 1)}px;
  padding: ${(p) => (p.$on ? "0 2px 0 27px" : "0 4px 0 7px")};
  border-top: 1px solid #fff;
  color: ${(p) => (p.$on ? "#000" : "#fff")};
  font-weight: ${(p) => (p.$on ? 700 : 400)};
  background: ${(p) => (p.$on ? "#fff" : "linear-gradient(135deg, #fff 5px, #565656 5px)")};
  clip-path: ${(p) => (p.$on ? "polygon(0 100%, 18px 0, 100% 0, 100% 100%)" : "polygon(0 100%, 0 5px, 5px 0, 100% 0, 100% 100%)")};
`;
const Arrows = styled.div<{ $end?: boolean }>`
  display: flex;
  align-self: center;
  gap: 10px;
  ${(p) => (p.$end ? "margin: 0 12px 0 auto;" : "margin: 0 4px;")}
`;
const Arrow = styled.button`
  width: 8px;
  height: 10px;
`;
const ArrowGlyph = styled.svg`
  display: block;
  width: 8px;
  height: 9px;
  fill: none;
  stroke: #444a54;
`;
const Canvas = styled.div`
  position: relative;
  flex: 1;
  background: #fff;
  border-left: 2px solid #9b9fa5;
  &::after {
    content: "";
    position: absolute;
    right: 2px;
    bottom: 1px;
    width: 11px;
    height: 1px;
    background: #222;
  }
`;
const Dock = styled.section`
  display: flex;
  flex-direction: column;
  height: 227px;
  margin-top: 5px;
  background: #f0f0f0;
  border: 1px solid #d4d4d4;
`;
const DockTitle = styled.h2`
  display: flex;
  align-items: center;
  gap: 9px;
  height: 20px;
  margin: 0;
  padding: 0 4px 0 3px;
  font-size: 11px;
  font-weight: 400;
  color: #3c3c3c;
  background: #9c9e9c;
`;
const DockName = styled.span`
  flex: 1;
`;
const DockGlyph = styled.svg`
  display: block;
  width: 9px;
  height: 9px;
  fill: none;
  stroke: #333;
`;
const DockBar = styled.div`
  display: flex;
  align-items: center;
  height: 26px;
  margin: 1px 3px 0;
  padding-left: 3px;
  background: linear-gradient(#cfd3d9, #b8bdc7 50%, #8f96a2);
`;
const HeaderCells = styled.div`
  display: flex;
  height: 2px;
  margin: 0 3px;
  background: #f4f4f4;
`;
const HeaderCell = styled.i<{ $w: number }>`
  width: ${(p) => p.$w}px;
  border-right: 1px solid #a8a8a8;
`;
const List = styled.div`
  flex: 1;
  margin: 0 3px;
  background: #7ce5e8;
`;
const Scroller = styled.div`
  height: 14px;
  padding: 3px 70px 0 20px;
  &::after { content: ""; display: block; height: 2px; background: #868686; border-radius: 1px; }
`;

const PaneTabs = styled.div`
  display: flex;
  height: 22px;
  padding-left: 3px;
  color: #fff;
`;
const PaneTab = styled.button<{ $on?: boolean }>`
  display: flex;
  align-items: center;
  gap: ${(p) => (p.$on ? 1 : 3)}px;
  height: 20px;
  padding: 0 3px 0 6px;
  ${(p) =>
    p.$on &&
    css`
      padding: 0 4px 0 2px;
      color: #000;
      background: linear-gradient(#d3d7de, #fff);
      border: 1px solid #c8eef0;
      border-top: 0;
      border-radius: 0 0 3px 3px;
    `}
`;

const Status = styled.footer`
  display: flex;
  align-items: center;
  height: 20px;
  padding: 0 0 0 2px;
  background: linear-gradient(#434653, #34363f 45%, #262626 50%, #2c2c2c);
  color: #fff;
  border-top: 1px solid #5a5c61;
`;
const Field = styled.span<{ $w?: number; $tone?: string }>`
  ${(p) => (p.$w ? `flex: none; width: ${p.$w}px;` : "flex: 1;")}
  padding-left: 2px;
  color: ${(p) => p.$tone ?? "#fff"};
  & + & { border-left: 1px solid #74767c; }
`;
const SizeGrip = styled.svg`
  flex: none;
  align-self: flex-end;
  width: 21px;
  height: 12px;
  fill: #b5b5b5;
`;

const menu: [string, string, string][] = [
  ["", "A", "rchivo"], ["", "E", "dición"], ["", "V", "er"], ["", "D", "ibujar"], ["", "I", "nsertar"], ["", "P", "lanos"],
  ["Da", "t", "os"], ["", "C", "alcular"], ["", "R", "esultados"], ["", "H", "erramientas"], ["Ay", "u", "da"],
];

function Tabs({ items }: { items: [string, string][] }) {
  return (
    <PaneTabs role="tablist">
      {items.map(([icon, label], i) => (
        <PaneTab key={label} role="tab" $on={i === 0} aria-selected={i === 0}>
          <Icon name={icon} />
          {label}
        </PaneTab>
      ))}
    </PaneTabs>
  );
}

export default function App() {
  return (
    <Shell>
      <Global />
      <TitleBar>
        <Icon name="logo" />
        <Title>Unifamiliar BIM.tk - TeKton3D: Edificación e Instalaciones 3D - ULIC</Title>
        <WindowButtons>
          {[["Minimizar", "M0 5.500h10"], ["Maximizar", "M.5 .5h9v9h-9z"], ["Cerrar", "M0 0l10 10M10 0L0 10"]].map(([label, d]) => (
            <WindowButton key={label} aria-label={label}>
              <WindowGlyph viewBox="0 0 10 10"><path d={d} /></WindowGlyph>
            </WindowButton>
          ))}
        </WindowButtons>
      </TitleBar>
      <MenuBar>
        <Grip $light />
        {menu.map(([before, key, after]) => (
          <MenuItem key={after}>{before}<u>{key}</u>{after}</MenuItem>
        ))}
      </MenuBar>

      <BarRow>
        <Bar $grow>
          <Grip />
          <Tools list="newDoc open import save | print preview | -undo v -redo v | -cut -copy paste | -cross -edit -brush | sigma > | zoom zoomIn zoomOut hand fit home v feet | +ball sun | +redTile +wall cube ramp frames funnel | ruler tag | layers |" />
          <More chevrons />
        </Bar>
        <Bar>
          <Grip />
          <Tools slim list="+hatch -key sync | +axisCube box +gear +window +door +square corner +beam +weight stairs chair toilet +ring" />
          <More />
        </Bar>
      </BarRow>
      <BarRow>
        <Bar>
          <Grip />
          <Tools slim list="-form -tagGear | sheetGrid sheetLines | sheetTable sheetTable2" />
          <FontSelect aria-label="Estilo de texto"><option>Arial - Azul</option></FontSelect>
          <Tools slim list="| sheetPlan -books" />
          <More />
        </Bar>
        <Bar $grow>
          <Grip />
          <Caption htmlFor="cota">Cota sobre planta:</Caption>
          <HeightInput id="cota" defaultValue="0,000" />
          <Spinner>
            <Step $up aria-label="Subir" />
            <Step aria-label="Bajar" />
          </Spinner>
          <Tools slim list="-swap lock -level -waves | dots +magnetDots | +angle +angleMagnet | metre | note -trapeze | -selCheck -selCross | -cubeBlue -cubeDots | magnet Nm v | listOk listBad" />
          <More />
        </Bar>
        <Bar>
          <Grip />
          <Tools slim list="screen | +house1 house2 house3 | axes pipes overlap |" />
          <Spacer />
          <More chevrons />
        </Bar>
      </BarRow>

      <Work>
        <Rail>
          <Bar $vertical>
            <Grip $flat />
            <Tools flat list="logoTool | node pipe arrow outlet | meter tank pump loop joint heater | valveRed zed filter | tap gauge | boiler radiator redCircle | threeWay | -checkDoc" />
            <RailEnd />
          </Bar>
        </Rail>
        <Column $width={239} $gap={2}>
          <SidePane $tone="#e4cf7b" />
          <Tabs items={[["folders", "Proyecto"], ["binoculars", "Buscar"], ["docCheck", "Comprobar"]]} />
        </Column>
        <Column $gap={4}>
          <DocTabs role="tablist">
            <Arrows>
              <Arrow aria-label="Primera"><ArrowGlyph viewBox="0 0 8 9"><path d="M.5 0v9M6.500 1v7L3 4.500z" /></ArrowGlyph></Arrow>
            </Arrows>
            <DocTab role="tab" $on aria-selected><Icon name="dish" />Fontanería</DocTab>
            <DocTab role="tab"><Icon name="docCube" />Detalles</DocTab>
            <DocTab role="tab"><Icon name="docText" />Listados</DocTab>
            <DocTab role="tab"><Icon name="docPlan" />Planos</DocTab>
            <Arrows $end>
              {[["Anterior", "M6 .5v8l-4-4z"], ["Siguiente", "M2 .5v8l4-4z"], ["Última", "M7.500 0v9M1.500 1v7L5 4.500z"]].map(([label, d]) => (
                <Arrow key={label} aria-label={label}><ArrowGlyph viewBox="0 0 8 9"><path d={d} /></ArrowGlyph></Arrow>
              ))}
            </Arrows>
          </DocTabs>
          <Canvas />
          <Dock>
            <DockTitle>
              <DockName>Capítulos</DockName>
              <button aria-label="Fijar"><DockGlyph viewBox="0 0 9 9"><path d="M2 .5h5M2.500 0v5M6 0v5M1 5.500h7M4.500 5v4" /></DockGlyph></button>
              <button aria-label="Cerrar"><DockGlyph viewBox="0 0 9 9"><path d="M1 1l7 7M8 1L1 8" strokeWidth="1.500" /></DockGlyph></button>
            </DockTitle>
            <DockBar>
              <Tools slim list="star v | -copy folderIn | tiles | folderX | up down | scribble +eye +ball palette | -tools -windows -syncGreen | reload" />
            </DockBar>
            <HeaderCells>
              {[206, 24, 24, 24, 24, 55, 59, 70, 66, 56, 76].map((w, i) => <HeaderCell key={i} $w={w} />)}
            </HeaderCells>
            <List />
            <Scroller />
          </Dock>
          <Tabs items={[["star", "Capítulos"], ["clipX", "Errores"], ["notepad", "Notas"], ["users", "Usuarios"]]} />
        </Column>
        <Column $width={249} $gap={5}>
          <SidePane $tone="#a5e77b" $foot />
          <PaneFoot />
          <Tabs items={[["listGear", "Herramienta..."], ["bcf", "BCF"], ["knot", "Clasificación"]]} />
        </Column>
        <Rail>
          <Bar $vertical>
            <Grip $flat />
            <Tools flat list="-move -rotate -rotateLine -scale -moveRed -mirror | -lines3 -bend -tee | -spacing -dashes -stick -bomb | -tube -polyline | -blobs -hook | selector -path1 -path2 -path3 | -pencilForm" />
          </Bar>
          <SideMoreButton aria-label="Opciones de la barra">
            <MoreGlyph viewBox="0 0 7 6">
              <path d="M.5 0v6" />
              <path d="M3 0v6l3-3z" fill="#fff" stroke="none" />
            </MoreGlyph>
          </SideMoreButton>
        </Rail>
      </Work>

      <Status>
        <Field $w={336}>Para obtener ayuda presione F1</Field>
        <Field $w={318} $tone="#c5c500">0 seleccionados</Field>
        <Field />
        <Field $w={86} $tone="#f00">-3,31</Field>
        <Field $w={86} $tone="#008000">-1,21</Field>
        <Field $w={85} $tone="#00f">0,00</Field>
        <Field $w={29}>ORT</Field>
        <Field $w={29} $tone="#777">REJ</Field>
        <Field $w={29}>IMA</Field>
        <Field $w={29} $tone="#777">MAY</Field>
        <Field $w={26}>NUM</Field>
        <SizeGrip viewBox="0 0 21 12" aria-hidden="true">
          <path d="M18 1h2v2h-2zM15 4h2v2h-2zM18 4h2v2h-2zM12 7h2v2h-2zM15 7h2v2h-2zM18 7h2v2h-2z" />
        </SizeGrip>
      </Status>
    </Shell>
  );
}
